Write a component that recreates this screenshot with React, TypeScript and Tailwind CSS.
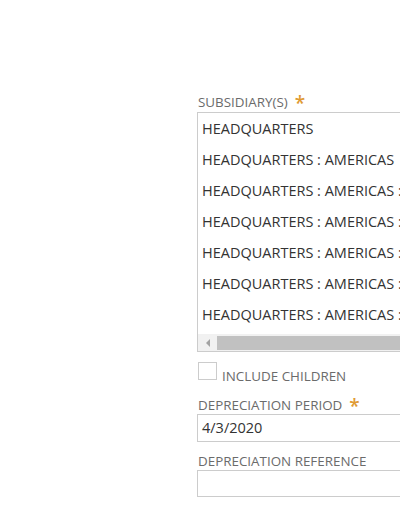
import React from "react";

const rows = [
  "HEADQUARTERS",
  "HEADQUARTERS : AMERICAS",
  "HEADQUARTERS : AMERICAS :",
  "HEADQUARTERS : AMERICAS :",
  "HEADQUARTERS : AMERICAS :",
  "HEADQUARTERS : AMERICAS :",
  "HEADQUARTERS : AMERICAS :",
];

function Label({ text, required }: { text: string; required?: boolean }) {
  return (
    <div className="flex items-center h-[16px] text-[13.4px] leading-[16px] text-[#6b6b6b] uppercase whitespace-nowrap">
      <span>{text}</span>
      {required && (
        <span className="ml-[7px] text-[#e09a33] text-[19px] leading-[16px] relative top-[1px] font-semibold">*</span>
      )}
    </div>
  );
}

export default function App() {
  return (
    <div
      className="w-[400px] h-[516px] overflow-hidden bg-white"
      style={{ fontFamily: '"Open Sans", "Liberation Sans", sans-serif' }}
    >
      <div className="pl-[197px] pt-[94px] w-[560px]">
        {/* Subsidiary list */}
        <div className="pl-[1px]">
          <Label text="Subsidiary(s)" required />
        </div>
        <div className="mt-[2px] border border-[#cccccc] w-[330px]">
          {rows.map((r, i) => (
            <div key={i} className="h-[31px] flex items-center pl-[4px] text-[14.5px] text-[#333333] whitespace-nowrap">
              {r}
            </div>
          ))}
          {/* horizontal scrollbar */}
          <div className="mt-[4px] h-[17px] bg-[#f1f1f1] flex items-center">
            <div className="w-[19px] flex justify-center">
              <div className="w-0 h-0 border-y-[4px] border-y-transparent border-r-[4px] border-r-[#a3a3a3]" />
            </div>
            <div className="flex-1 h-[14px] bg-[#c1c1c1] mr-[20px]" />
          </div>
        </div>

        {/* Include children */}
        <div className="mt-[10px] flex items-start pl-[1px]">
          <div className="w-[19px] h-[18px] border border-[#cccccc] bg-white" />
          <span className="ml-[5px] mt-[5px] text-[13.4px] leading-[18px] text-[#6b6b6b]">INCLUDE CHILDREN</span>
        </div>

        {/* Depreciation period */}
        <div className="mt-[12px] pl-[1px]">
          <Label text="Depreciation Period" required />
        </div>
        <div className="mt-[1px] h-[28px] border border-[#cccccc] w-[330px] flex items-center pl-[4px] text-[14.5px] text-[#333333]">
          4/3/2020
        </div>

        {/* Depreciation reference */}
        <div className="mt-[11px] pl-[1px]">
          <Label text="Depreciation Reference" />
        </div>
        <div className="mt-[1px] h-[27px] border border-[#cccccc] w-[330px]" />
      </div>
    </div>
  );
}
